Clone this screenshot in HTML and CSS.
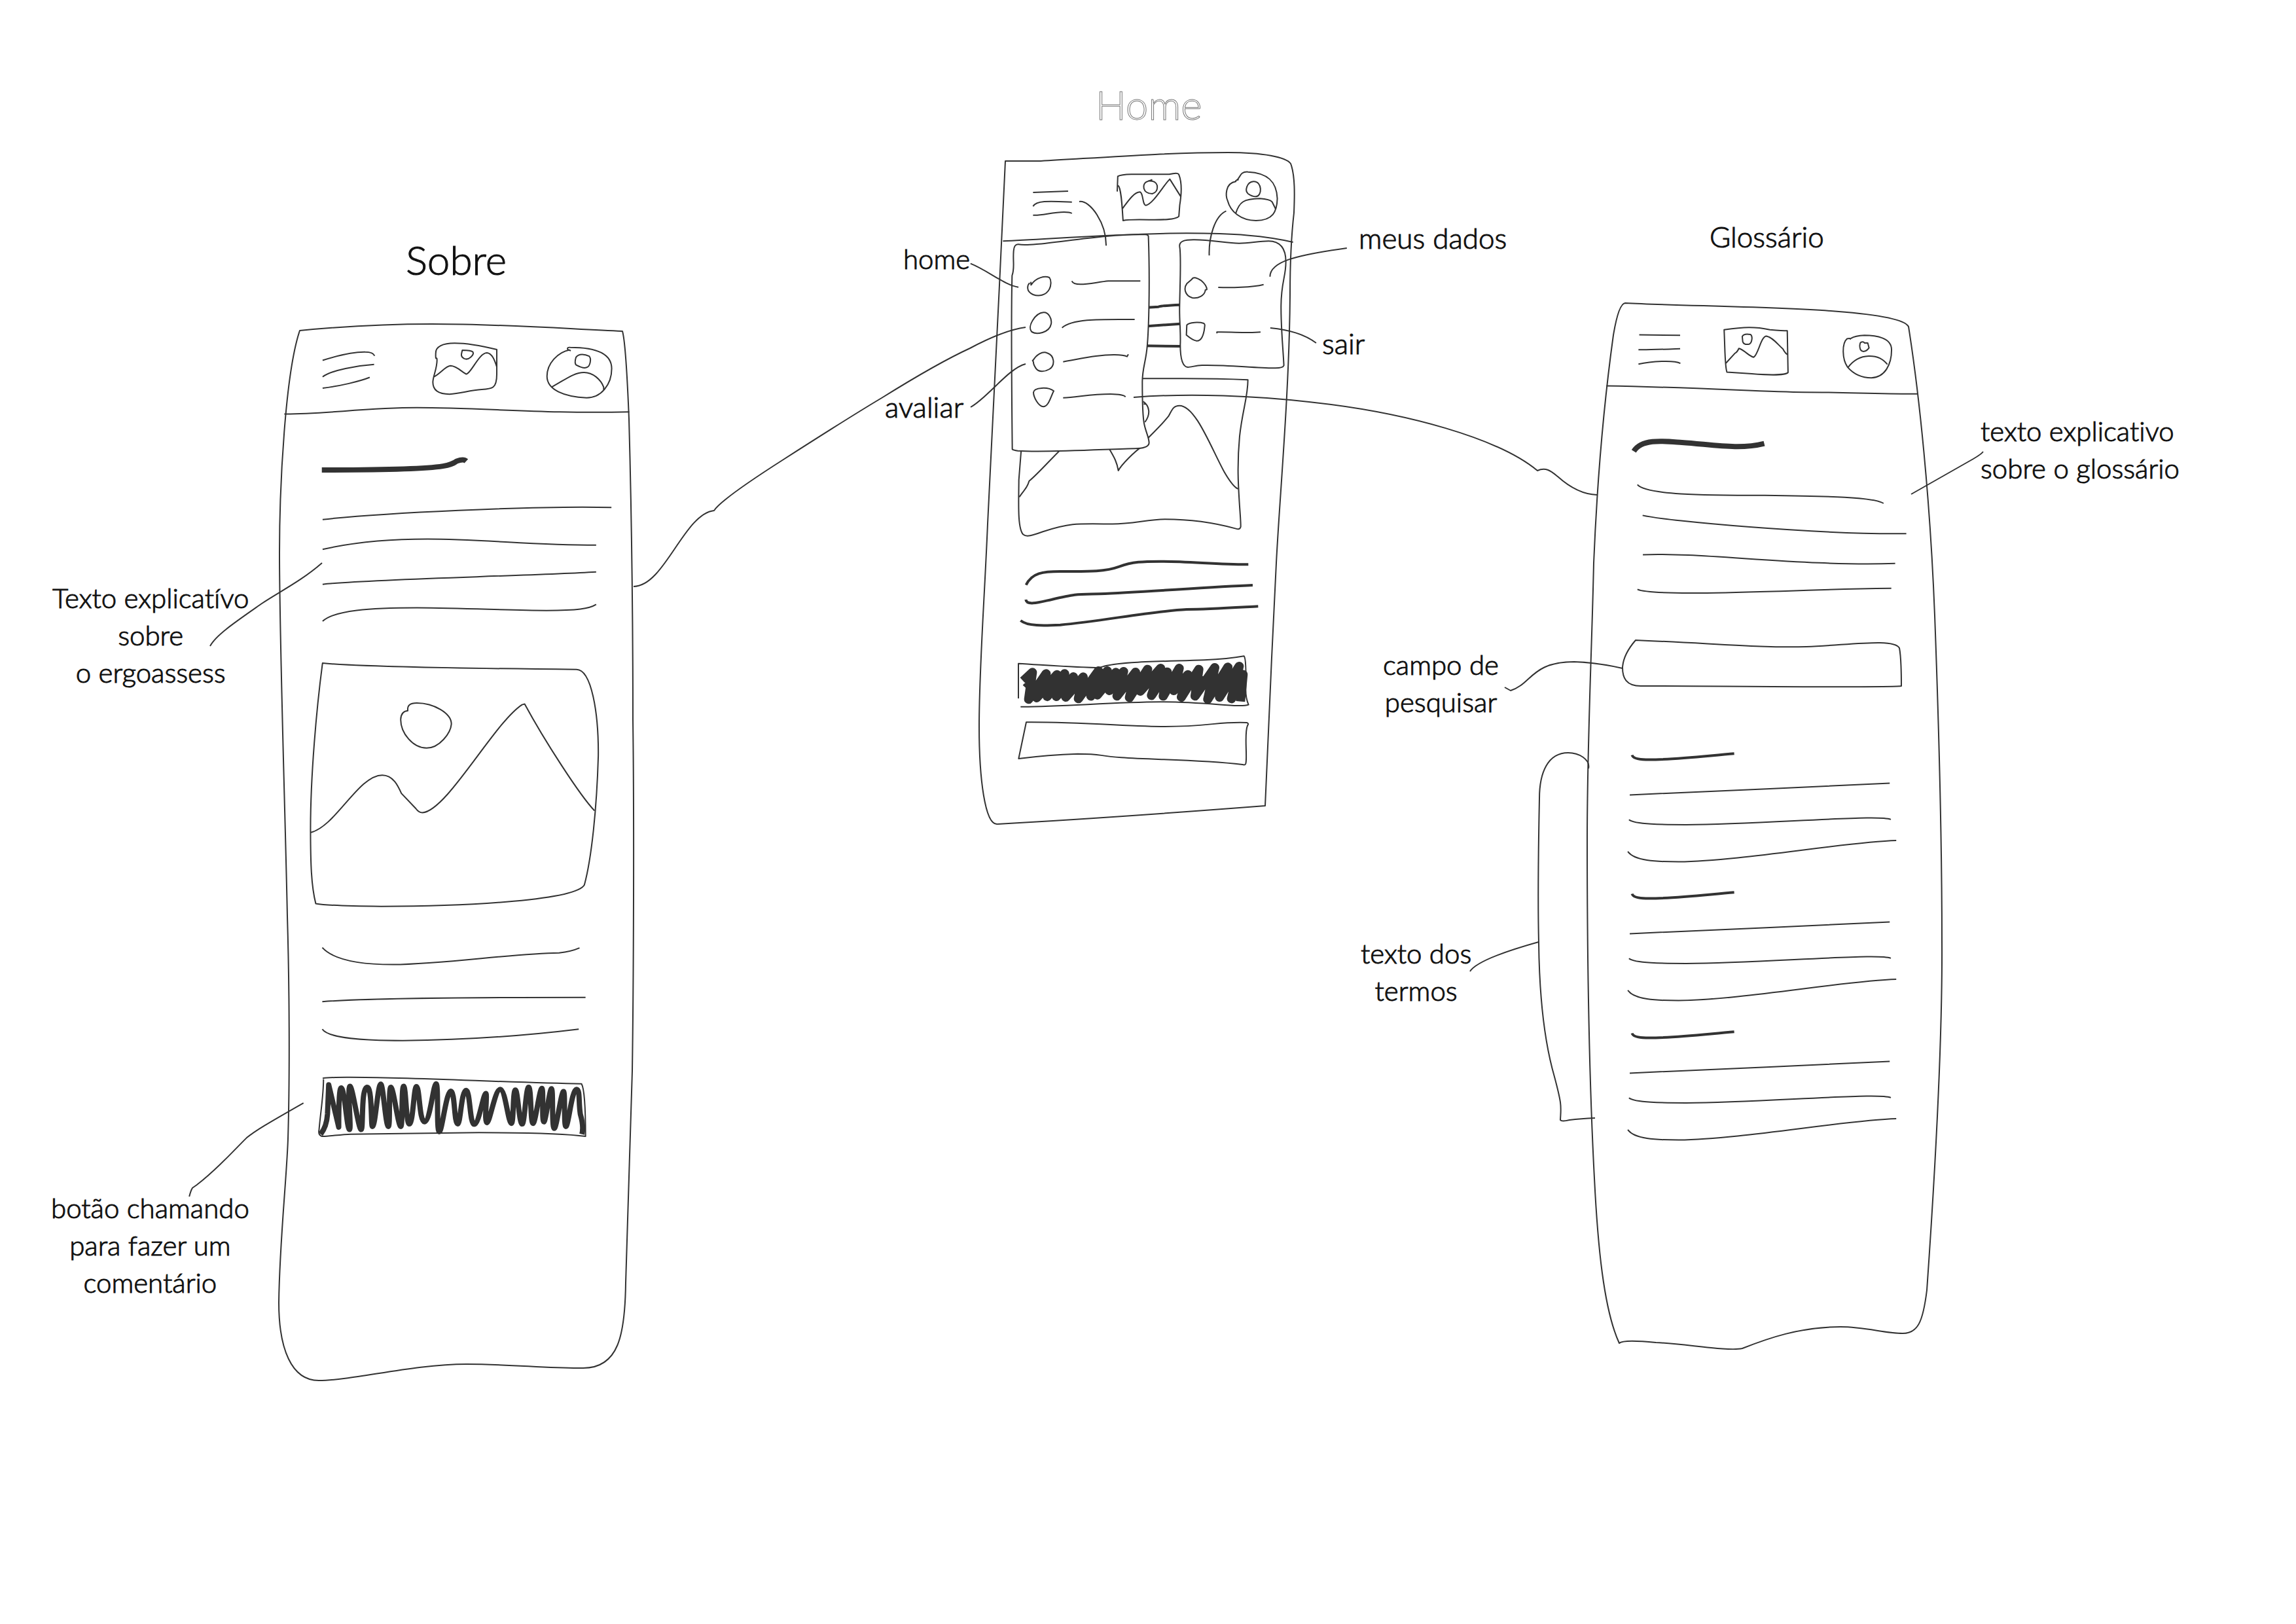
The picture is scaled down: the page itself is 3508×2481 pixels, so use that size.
FILE: index.html
```html
<!DOCTYPE html>
<html lang="pt-BR">
<head>
<meta charset="utf-8">
<meta name="viewport" content="width=device-width, initial-scale=1">
<title>Home, Sobre e Glossário</title>
<link rel="stylesheet" href="styles.css">
</head>
<body>
<main class="board">
  <svg class="ink" viewBox="0 0 3508 2481" aria-hidden="true">
    <defs>
      <g id="term" transform="translate(2060 940) scale(.5867 .3827)">
        <path class="bold" d="M739 558 Q742 575 775 576 C840 578 920 563 1005 552"/>
        <path d="M733 717 C850 707 1250 684 1410 670"/>
        <path d="M731 816 C745 835 820 836 880 836 C1040 834 1230 812 1350 809 Q1400 808 1413 815"/>
        <path d="M728 943 C745 980 800 984 860 984 C1030 980 1290 905 1427 899"/>
      </g>
    </defs>

    <!-- Sobre -->
    <path d="M458 505 C530 498 600 495 660 495 C770 495 860 502 951 506 C955 520 959 590 961 640 C964 750 967 900 967 1100 C969 1250 968 1500 966 1636 C964 1730 959 1830 956 1960 C955 2040 945 2090 891 2090 C840 2091 780 2084 713 2084 C630 2084 540 2109 487 2109 C445 2109 426 2060 426 1990 C427 1900 438 1800 440 1740 C443 1640 442 1500 439 1400 C436 1250 427 980 427 845 C427 740 436 570 458 505Z"/>
    <g transform="translate(400 340) scale(.3954 .4209)">
      <path d="M87 695 C240 696 400 672 600 672 C850 672 1100 695 1420 687"/>
      <path d="M235 500 C290 484 360 469 400 470 Q430 470 436 484 M235 560 C270 535 370 519 434 515 M235 601 C300 594 380 576 417 562"/>
      <path d="M908 461 C860 450 800 438 745 438 C700 438 671 450 672 475 C671 510 677 480 677 500 C677 530 661 560 661 580 C661 610 685 623 725 623 C770 621 800 609 850 606 C890 604 908 603 908 550Z"/>
      <path d="M775 463 C770 480 768 487 782 494 Q795 499 807 489 Q820 478 816 470 C810 463 790 463 775 463Z M665 560 C690 549 710 520 730 520 C755 521 780 548 791 550 C810 545 840 473 870 473 C890 475 900 500 908 524"/>
      <path d="M1194 465 L1182 461 Q1178 452 1192 453 C1280 453 1352 470 1352 530 C1352 590 1310 636 1255 636 C1170 633 1102 608 1102 558 C1102 510 1145 470 1190 462 M1120 597 C1170 572 1205 544 1245 544 C1280 544 1310 570 1321 597 V608 M1214 489 C1225 474 1250 478 1265 485 C1275 495 1268 520 1258 525 Q1245 532 1215 517 Q1207 512 1214 489Z"/>
      <path class="heavy" d="M232 898 C400 898 620 896 700 884 Q735 879 753 866 Q780 857 790 866"/>
      <path d="M235 1078 C450 1055 1050 1027 1351 1034 M235 1186 C350 1162 480 1149 640 1149 C850 1149 1050 1171 1292 1171 M235 1313 C400 1294 1000 1284 1292 1268 M235 1447 C280 1407 420 1398 600 1398 C800 1399 950 1408 1100 1408 C1220 1408 1265 1402 1292 1386"/>
    </g>
    <g transform="translate(60 860) scale(.574 .3827)">
      <path d="M754 400 C860 415 1200 422 1430 425 C1470 425 1489 600 1488 770 C1484 980 1470 1180 1451 1285 C1430 1345 1150 1371 910 1371 C800 1370 760 1366 736 1360 C724 1290 722 1200 722 1060 C722 850 738 580 754 400Z"/>
      <path d="M981 590 C979 570 986 559 1005 559 C1050 559 1097 600 1097 643 C1095 680 1065 739 1031 739 C995 739 962 680 962 625 Q963 592 981 590Z"/>
      <path d="M723 1076 C790 1050 850 847 913 847 C942 847 955 890 964 920 L1002 980 Q1010 997 1020 997 C1085 990 1210 640 1285 566 L1292 563 C1345 710 1440 930 1478 989"/>
    </g>
    <g transform="translate(40 1400) scale(.6122 .4719)">
      <path d="M739 101 C770 145 840 156 915 156 C1050 154 1210 120 1330 118 Q1360 114 1381 102 M739 276 C850 264 1150 262 1396 262 M739 365 C755 395 840 402 940 402 C1100 400 1260 384 1379 365"/>
      <path d="M740 524 Q755 521 800 521 C950 520 1200 538 1386 542 C1394 560 1396 650 1396 712 C1340 702 1240 700 1130 700 C1000 702 900 704 810 705 C785 706 750 713 738 712 Q728 708 731 690 C735 630 742 580 742 527"/>
      <path class="scribble-thin" d="M735 705 Q750 680 752 640 L755 545 L765 600 L780 682 Q780 555 786 555 C795 555 800 690 807 690 C812 690 801 550 808 550 C815 550 829 690 836 690 C842 690 835 553 851 553 C864 553 860 680 864 680 C872 680 877 543 885 543 C891 543 897 680 904 680 C909 680 904 553 910 553 C917 553 928 680 935 680 C940 680 936 550 942 550 C948 550 948 672 956 672 C966 672 967 551 974 551 C982 551 981 665 994 665 C1008 665 1016 542 1023 542 C1030 542 1023 697 1031 697 C1038 697 1048 566 1060 566 C1070 566 1068 672 1077 672 C1084 672 1086 563 1098 563 C1108 563 1107 673 1118 673 C1130 673 1141 573 1147 573 C1152 573 1142 668 1150 668 C1157 668 1170 560 1183 560 C1196 560 1203 670 1211 670 C1217 670 1214 562 1221 562 C1227 562 1230 672 1238 672 C1244 672 1247 553 1254 553 C1261 553 1258 670 1265 670 C1271 670 1281 557 1287 557 C1292 557 1286 665 1292 665 C1297 665 1306 558 1311 558 C1316 558 1311 686 1318 686 C1324 686 1335 567 1341 567 C1346 567 1341 680 1347 680 C1353 680 1362 560 1373 560 C1383 560 1378 600 1383 640 Q1392 680 1387 705"/>
      <path d="M692 604 C600 672 570 695 550 717 C520 755 480 815 425 870 L415 879 Q411 887 407 907"/>
    </g>
    <path d="M492 860 C460 888 425 905 400 922 C360 950 330 970 321 987"/>

    <!-- Home -->
    <path d="M1536 246 H1590 C1680 241 1780 233 1876 233 C1930 233 1965 240 1972 250 C1979 268 1978 300 1977 325 C1973 360 1971 400 1971 450 C1970 600 1955 760 1950 860 C1944 980 1937 1130 1933 1231 Q1700 1249 1523 1259 C1505 1259 1496 1190 1496 1110 C1496 1020 1504 920 1509 800 C1516 640 1528 430 1536 246Z"/>
    <g transform="translate(1340 100) scale(.4464 .3333)">
      <path d="M431 805 C600 795 850 769 1060 769 C1220 769 1330 780 1424 810"/>
      <path d="M534 582 L654 576 M534 646 C545 618 590 622 667 626 M534 686 C560 690 600 672 640 672 Q660 672 667 678"/>
      <path d="M822 578 L824 508 Q835 500 870 499 H1000 Q1030 489 1033 500 C1045 540 1041 600 1036 640 L1033 692 C1020 710 960 707 930 707 Q860 705 842 711 C839 650 836 560 825 550 M840 656 C860 620 880 580 900 580 C912 585 908 640 920 641 C945 635 980 550 1002 521 L1040 602"/>
      <path d="M942 523 L925 532 C905 540 908 588 942 588 C965 580 965 535 942 530 L928 529"/>
      <path d="M1238 523 Q1225 527 1228 532 C1190 540 1193 600 1200 620 C1210 670 1245 711 1297 711 C1355 710 1369 670 1370 610 C1368 530 1335 492 1270 488 C1240 485 1245 515 1230 527 M1228 677 C1240 625 1255 612 1310 610 Q1345 614 1352 625 L1364 657 M1288 532 C1265 535 1258 575 1270 588 Q1283 601 1297 601 C1318 600 1320 530 1288 532Z"/>
    </g>
    <g transform="translate(1480 340) scale(.3333)">
      <path class="bold" d="M820 389 L870 386 Q890 380 970 377 M820 475 L970 464 M810 565 L975 567"/>
      <path d="M240 715 H980 Q1150 715 1280 721 C1280 800 1255 860 1242 980 C1229 1120 1237 1220 1242 1300 Q1248 1380 1247 1395 Q1243 1409 1225 1403 C1130 1377 1020 1360 900 1360 C820 1361 750 1382 660 1382 C500 1380 470 1375 340 1417 C290 1435 265 1443 250 1430 C222 1400 230 1270 230 1180 L241 1040"/>
      <path d="M232 1258 C260 1220 270 1210 277 1185 C320 1150 380 1080 425 1038 M640 1030 C670 1080 680 1100 686 1137 C700 1110 760 1050 790 1030 L826 984 C860 950 890 920 916 888 C930 865 935 839 966 839 C1040 839 1110 1030 1170 1140 Q1210 1210 1235 1221 M800 820 C830 840 835 880 808 915 M802 832 L815 832"/>
      <path class="paper" d="M200 1039 C198 850 195 400 199 243 C212 210 202 180 206 130 Q208 98 228 100 C300 115 600 50 810 55 Q825 56 824 65 C830 230 828 450 819 560 C813 640 797 660 796 730 C796 820 797 890 805 925 C812 960 827 985 827 1010 Q825 1033 775 1035 C600 1040 350 1055 225 1046 Q205 1044 200 1039Z"/>
      <path class="paper" d="M967 110 C964 85 990 79 1030 79 C1110 78 1180 95 1240 95 C1290 94 1330 85 1375 85 C1430 86 1454 120 1454 180 C1454 250 1433 270 1432 380 C1431 480 1440 560 1445 655 Q1441 668 1400 667 C1300 666 1180 651 1070 654 C1040 655 1020 663 1005 663 C980 661 970 625 970 560 C973 500 965 450 967 380 C969 270 975 150 967 110Z"/>
      <path d="M285 272 L286 286 C310 250 350 244 370 252 C380 265 378 290 370 305 C355 335 320 340 295 330 C260 315 270 285 280 277 M343 412 C365 410 383 440 378 465 C370 505 310 517 288 500 C268 475 305 415 343 412Z M294 634 C310 605 340 588 360 598 C395 610 397 655 370 672 C350 684 320 687 308 668 Q296 650 297 640 L293 632Z M390 772 C365 752 300 755 297 778 C297 800 320 844 343 844 C368 840 375 800 390 772Z"/>
      <path d="M473 268 C485 298 570 275 640 268 H787 M428 482 C480 438 620 444 761 444 M433 638 C530 621 600 605 670 606 Q710 606 726 614 L732 604 M433 803 C500 800 560 786 650 786 Q710 787 719 799"/>
      <path d="M1022 261 C1030 245 1050 255 1065 265 C1080 278 1092 290 1092 307 L1085 309 C1083 335 1050 350 1025 345 C990 335 985 300 1000 280Z M1000 470 C1010 455 1060 456 1078 462 Q1084 466 1082 475 C1078 520 1065 545 1043 542 Q1025 538 998 515Z"/>
      <path d="M1144 297 C1200 300 1300 297 1352 284 M1138 508 V502 C1200 500 1280 508 1338 502"/>
    </g>
    <g transform="translate(1480 820) scale(.3333)">
      <path class="bold" d="M263 221 C290 165 340 159 420 159 C530 159 620 163 690 137 C750 114 800 113 880 113 C1000 112 1150 128 1282 127 M262 288 C265 320 340 296 380 288 C500 260 500 264 600 262 C800 254 1100 230 1302 222 M238 384 C270 410 340 408 420 404 C600 388 850 340 1000 333 C1100 333 1250 323 1327 319"/>
      <path d="M228 741 V581 C350 588 500 600 600 600 C680 570 900 572 1080 565 Q1190 560 1262 547 C1275 560 1270 680 1270 700 Q1270 740 1283 770 C1240 785 1100 757 880 757 C650 758 430 780 238 779"/>
      <path d="M264 850 C500 848 750 870 900 870 C1100 870 1150 846 1275 852 Q1286 855 1278 866 C1263 900 1277 1000 1271 1035 Q1271 1049 1255 1044 C1050 1020 850 1023 700 1012 C580 1004 620 995 500 995 C400 998 320 1005 229 1017Z"/>
      <path class="scribble-wide" d="M250 661 L292 622 L275 745 L355 628 L312 738 L405 632 L360 732 L440 628 L402 732 L480 642 L445 735 L525 643 L503 742 L595 615 L560 730 L635 615 L590 725 L675 622 L645 705 L710 618 L680 730 L765 621 L737 737 L820 608 L787 708 L880 603 L838 727 L910 620 L892 730 L965 603 L940 705 L1005 632 L975 735 L1055 608 L1038 730 L1128 600 L1096 745 L1188 598 L1150 735 L1240 594 L1205 742 L1258 632 L1246 755 M262 665 L290 690 L700 680 L1160 655"/>
    </g>
    <g transform="translate(1340 100) scale(.4464 .3333)">
      <path d="M692 624 C730 616 785 725 784 826 M1195 667 C1155 690 1135 790 1137 871 M320 908 C380 940 440 1010 484 1016 M1345 968 C1345 900 1430 870 1608 837 M1346 1203 C1410 1212 1460 1230 1503 1272"/>
    </g>
    <path d="M1483 622 C1510 607 1540 563 1567 556"/>
    <path d="M968 896 C1015 896 1045 785 1091 780 C1100 766 1150 732 1197 702 C1250 668 1300 636 1347 608 C1400 575 1445 549 1482 532 Q1535 504 1567 500"/>
    <path d="M1732 607 C1820 600 1920 605 2000 614 C2150 630 2290 670 2349 719 C2362 713 2370 720 2380 728 Q2410 755 2440 756"/>

    <!-- Glossário -->
    <path d="M2483 463 C2620 470 2900 468 2916 499 C2932 600 2949 760 2956 940 C2962 1100 2967 1280 2967 1437 C2968 1600 2956 1800 2944 1971 C2938 2020 2930 2037 2907 2037 C2880 2037 2850 2027 2812 2027 C2750 2027 2700 2045 2662 2060 C2640 2065 2570 2052 2530 2051 Q2480 2046 2474 2052 C2450 2000 2441 1900 2436 1800 C2428 1650 2425 1450 2425 1284 C2425 1130 2432 1000 2435 860 C2440 740 2450 620 2465 512 Q2473 464 2483 463Z"/>
    <g transform="translate(2380 320) scale(.3954 .4082)">
      <path d="M188 660 C500 665 800 682 950 684 C1100 684 1250 691 1390 690"/>
      <path d="M315 469 L473 471 M312 525 C350 526 420 523 473 521 M312 579 C360 568 450 563 474 576"/>
      <path d="M643 450 C720 440 760 438 820 450 Q870 454 887 454 L890 610 C880 622 800 619 750 615 L654 609 C646 590 647 540 643 450Z M650 575 L685 538 Q693 535 700 520 C720 525 740 550 757 553 C775 545 785 473 807 474 C830 478 850 505 870 522 Q880 540 888 543 M713 475 Q720 463 745 468 C755 475 750 500 740 504 Q720 508 715 495Z"/>
      <path d="M1130 487 Q1132 480 1118 484 C1098 500 1098 560 1120 590 C1145 618 1180 630 1212 630 C1265 628 1290 580 1290 525 C1290 480 1230 471 1185 471 Q1150 472 1132 483 M1122 591 C1165 535 1240 538 1274 580 M1170 498 Q1180 492 1186 500 H1198 L1203 518 C1190 536 1175 533 1170 525 Q1164 510 1170 498Z"/>
      <path class="heavy" d="M294 905 C325 855 420 868 480 872 C600 880 700 900 798 876"/>
      <path d="M308 1030 C340 1068 560 1070 800 1070 C1050 1073 1220 1076 1259 1100 M328 1145 C420 1166 1000 1217 1347 1213 M329 1292 C550 1282 950 1337 1304 1325 M308 1422 C360 1445 700 1433 880 1428 Q1100 1420 1289 1418"/>
    </g>
    <path d="M2499 978 C2620 983 2690 990 2760 988 C2830 985 2894 975 2902 990 Q2905 1005 2905 1048 C2880 1051 2650 1048 2507 1048 C2484 1048 2479 1035 2479 1020 Q2480 1000 2499 978Z"/>
    <path d="M2299 1050 L2308 1055 C2340 1045 2340 1011 2405 1011 Q2440 1012 2479 1021"/>
    <use href="#term"/>
    <use href="#term" y="212"/>
    <use href="#term" y="425"/>
    <path d="M2427 1174 C2430 1160 2412 1150 2396 1150 C2365 1150 2352 1180 2352 1220 C2350 1320 2350 1400 2351 1440 C2352 1530 2362 1600 2375 1645 C2387 1690 2385 1690 2384 1711 Q2386 1714 2398 1711 Q2415 1709 2437 1708"/>
    <path d="M2351 1439 Q2258 1465 2246 1484"/>
    <path d="M2920 755 L3015 701 Q3027 694 3030 690"/>
  </svg>

  <h1 class="title title-home">Home</h1>
  <h2 class="title title-sobre">Sobre</h2>
  <h2 class="note note-wide note-glossario">Glossário</h2>

  <p class="note note-menu-home">home</p>
  <p class="note note-wide note-avaliar">avaliar</p>
  <p class="note note-wide note-dados">meus dados</p>
  <p class="note note-wide note-sair">sair</p>
  <p class="note note-explica">texto explicativo<br>sobre o glossário</p>
  <p class="note note-ergo">Texto explicatívo<br>sobre<br>o ergoassess</p>
  <p class="note note-botao" id="botao">botão chamando<br>para fazer um<br>comentário</p>
  <label class="note note-campo" for="campo">campo de<br>pesquisar</label>
  <p class="note note-termos">texto dos<br>termos</p>

  <button class="hit hit-comment" type="button" aria-labelledby="botao"></button>
  <input class="hit hit-search" id="campo" type="search">
</main>
</body>
</html>
```
FILE: styles.css
```css
* {
  box-sizing: border-box;
}

body {
  margin: 0;
  background: #fff;
  color: #111;
  font-family: "Lato", "Liberation Sans", sans-serif;
  font-weight: 300;
  font-variant-ligatures: none;
}

/* The canvas keeps its proportions at any window width */
.board {
  position: relative;
  width: 100%;
  aspect-ratio: 3508 / 2481;
  overflow: hidden;
}

.ink {
  display: block;
  width: 100%;
  height: 100%;
}

.ink path {
  fill: none;
  stroke: #323232;
  stroke-width: 2px;
  stroke-linejoin: round;
  vector-effect: non-scaling-stroke;
}

.ink .paper {
  fill: #fff;
}

.ink .bold {
  stroke-width: 4px;
}

.ink .heavy {
  stroke-width: 8px;
}

.ink .scribble-thin {
  stroke-width: 8px;
}

.ink .scribble-wide {
  stroke-width: 14px;
}

/* Titles and annotations pinned on the canvas */
.title,
.note {
  position: absolute;
  margin: 0;
  font-weight: 300;
  text-align: center;
  white-space: nowrap;
  -webkit-text-stroke: 1px #111;
}

.title {
  font-size: 62px;
  line-height: 76px;
}

.note {
  font-size: 42px;
  line-height: 57px;
}

.note-wide {
  font-size: 44px;
}

.title-home {
  left: calc(1674 / 3508 * 100%);
  top: calc(121 / 2481 * 100%);
  color: transparent;
  -webkit-text-stroke: 1px #777;
}

.title-sobre {
  left: calc(620 / 3508 * 100%);
  top: calc(358 / 2481 * 100%);
}

.note-glossario {
  left: calc(2612 / 3508 * 100%);
  top: calc(333 / 2481 * 100%);
}

.note-menu-home {
  left: calc(1380 / 3508 * 100%);
  top: calc(367 / 2481 * 100%);
}

.note-avaliar {
  left: calc(1352 / 3508 * 100%);
  top: calc(593 / 2481 * 100%);
}

.note-dados {
  left: calc(2076 / 3508 * 100%);
  top: calc(335 / 2481 * 100%);
}

.note-sair {
  left: calc(2020 / 3508 * 100%);
  top: calc(496 / 2481 * 100%);
}

.note-explica {
  left: calc(3026 / 3508 * 100%);
  top: calc(630 / 2481 * 100%);
  text-align: left;
}

.note-ergo {
  left: calc(80 / 3508 * 100%);
  top: calc(885 / 2481 * 100%);
}

.note-botao {
  left: calc(78 / 3508 * 100%);
  top: calc(1817 / 2481 * 100%);
}

.note-campo {
  left: calc(2113 / 3508 * 100%);
  top: calc(987 / 2481 * 100%);
}

.note-termos {
  left: calc(2079 / 3508 * 100%);
  top: calc(1428 / 2481 * 100%);
}

/* Live controls laid over the drawn ones */
.hit {
  position: absolute;
  padding: 0 24px;
  border: 0;
  background: transparent;
  font: inherit;
  font-size: 42px;
}

.hit-comment {
  left: 14%;
  top: 66%;
  width: 12%;
  height: 4%;
}

.hit-search {
  left: 71%;
  top: 40%;
  width: 12%;
  height: 2%;
}
```
